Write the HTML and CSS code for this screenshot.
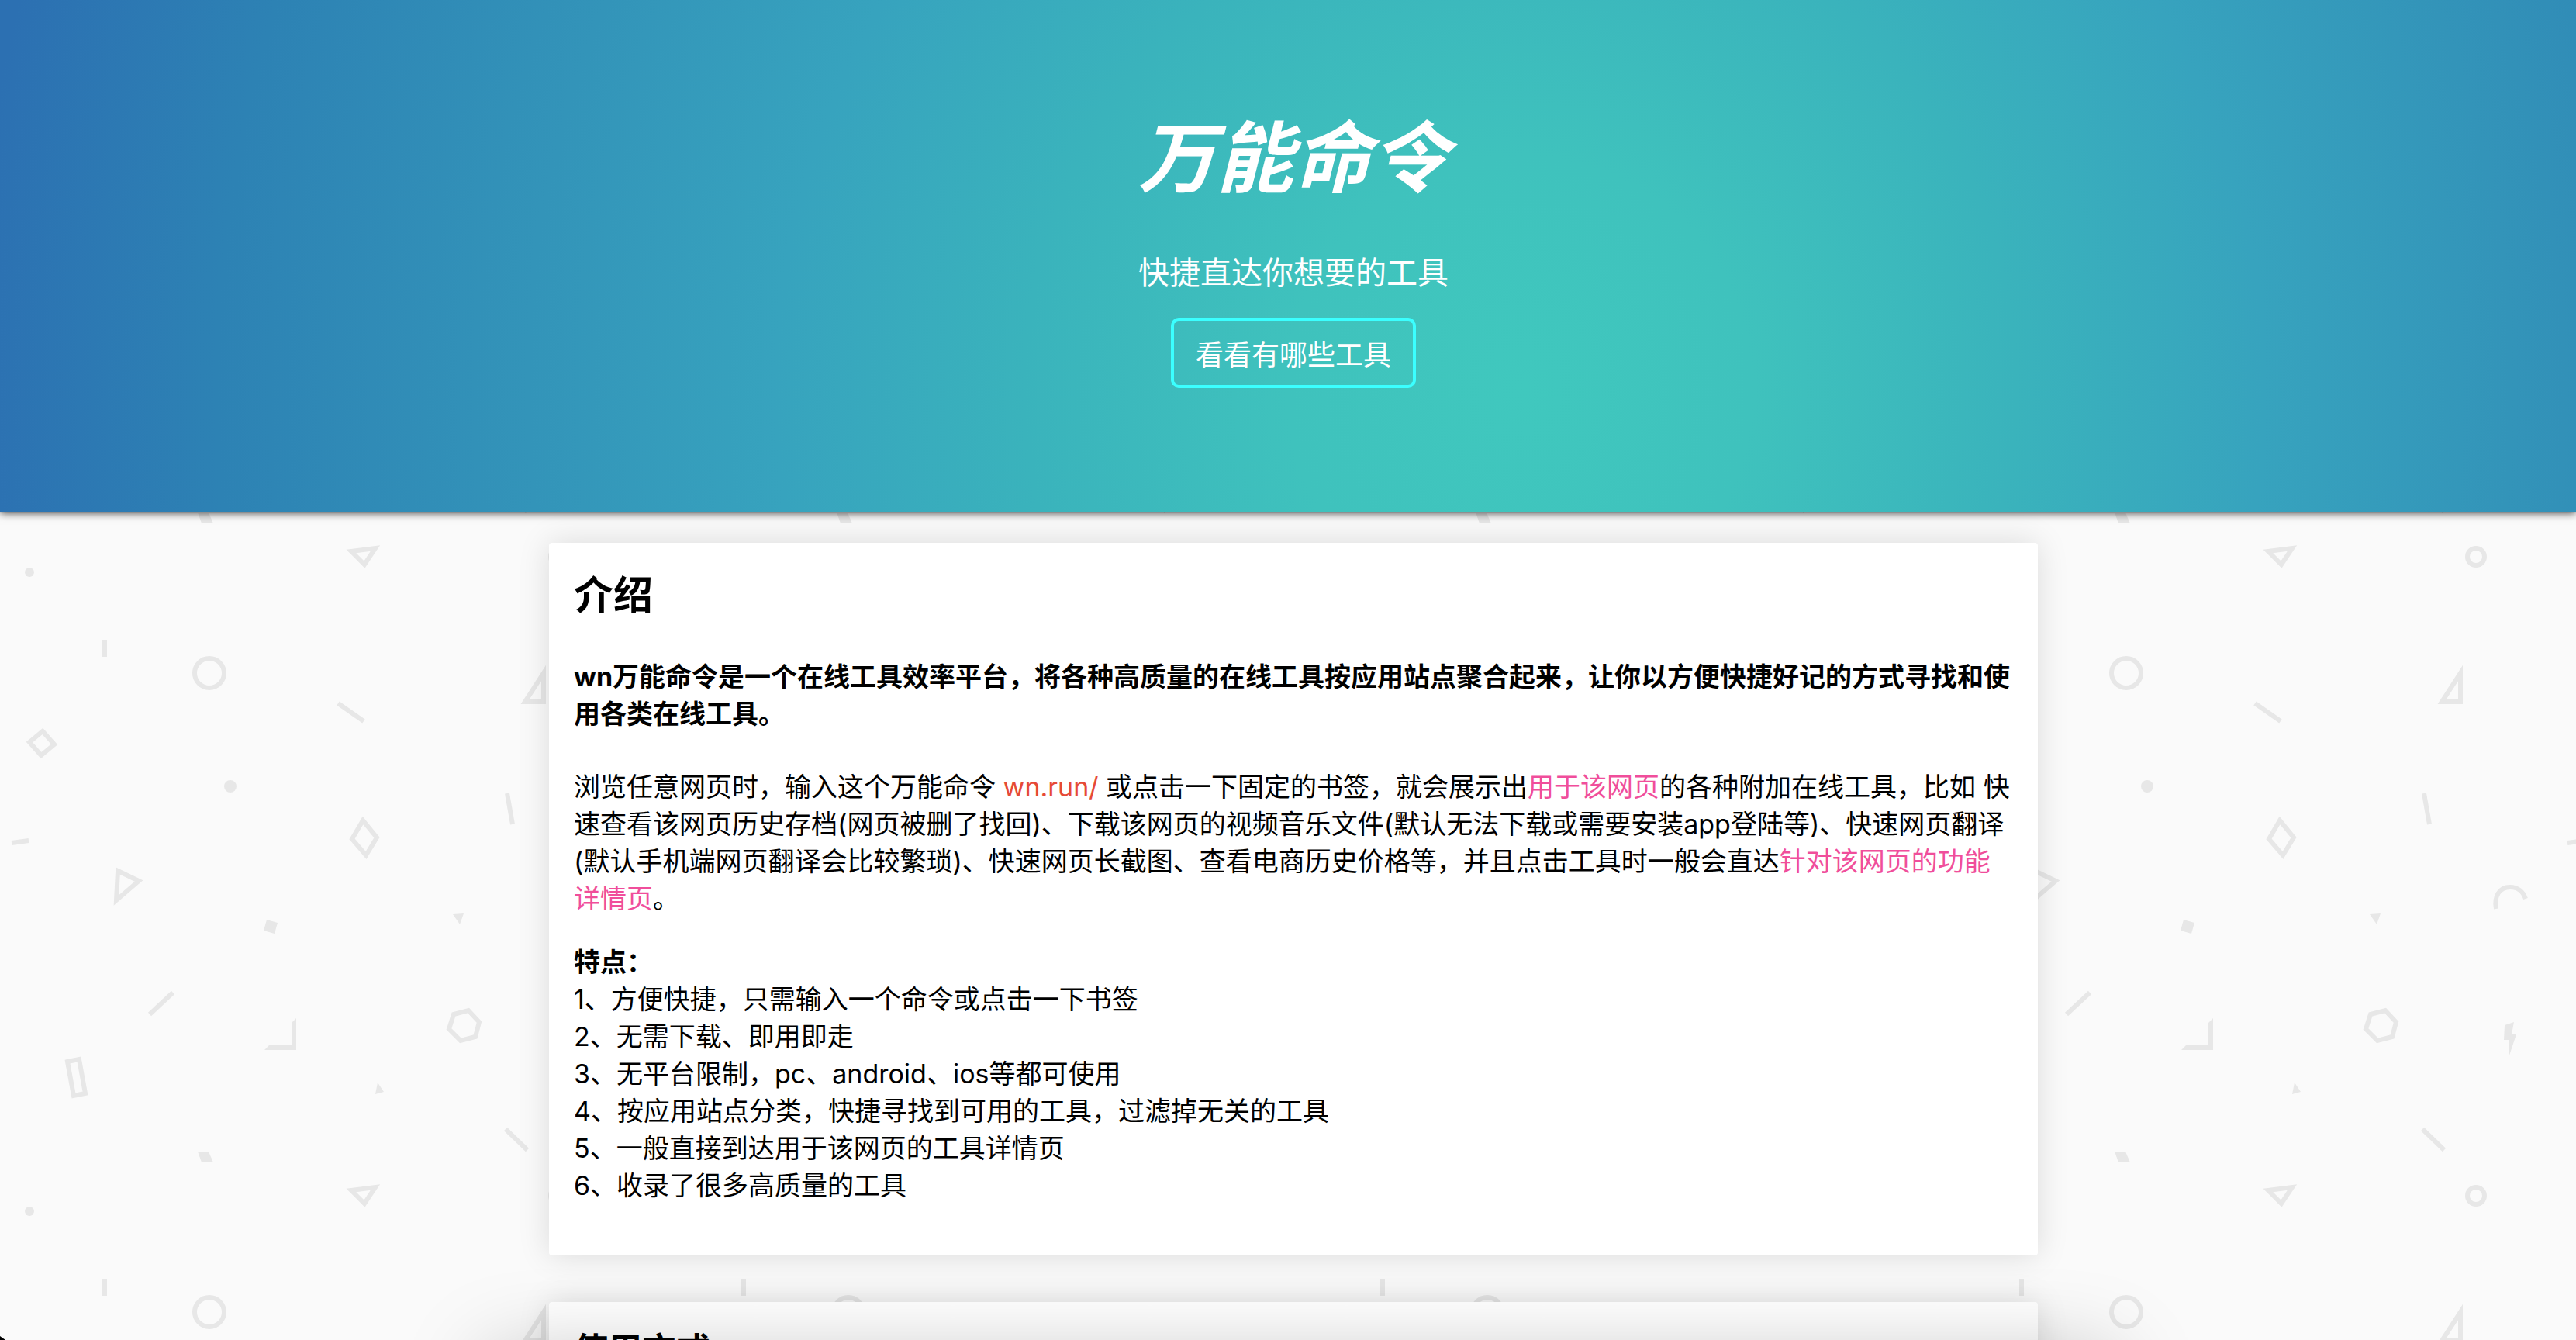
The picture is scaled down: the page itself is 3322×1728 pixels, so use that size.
FILE: index.html
```html
<!DOCTYPE html>
<html lang="zh-CN">
<head>
  <meta charset="UTF-8" />
  <meta name="viewport" content="width=device-width, initial-scale=1.0"/>
  <title>万能命令</title>
  <link rel="stylesheet" href="styles.css">
</head>
<body>
  <svg class="bg" width="100%" height="100%" aria-hidden="true">
    <defs>
      <pattern id="shapes" patternUnits="userSpaceOnUse" x="0" y="676" width="824" height="824" viewBox="0 676 824 824">
        <g class="filled">
          <circle cx="38" cy="738" r="6"/>
          <circle cx="297" cy="1014" r="8"/>
          <path d="M344 1186L358 1190L354 1204L340 1200Z"/>
          <path d="M584 1179L598 1178L593 1192Z"/>
          <path d="M487 1396L495 1408L484 1411Z"/>
          <path d="M255 1485H269L275 1499H260Z"/>
          <path d="M382 1313V1354H341L347 1348H376V1319Z"/>
          <path d="M758 1322L770 1318L767 1334H773L763 1364V1341H757Z"/>
        </g>
        <g class="lines">
          <path d="M453 711L484 707L470 728Z"/>
          <circle cx="721" cy="718" r="11"/>
          <path d="M135 825V847"/>
          <circle cx="270" cy="868" r="19"/>
          <path d="M436 907L469 930"/>
          <path d="M701 868V905H677Z"/>
          <path d="M55 943L70 960L53 974L38 957Z"/>
          <path d="M468 1058L486 1080L472 1103L454 1082Z"/>
          <path d="M654 1023L661 1063"/>
          <path d="M15 1087L37 1084"/>
          <path d="M152 1123L179 1136L150 1161Z"/>
          <path d="M747 1172C744 1156 751 1144 765 1144C775 1144 782 1150 785 1159"/>
          <path d="M193 1308L223 1280"/>
          <path d="M604 1303L618 1318L613 1337L594 1342L579 1327L585 1308Z"/>
          <path d="M87 1369L102 1366L110 1410L95 1413Z"/>
          <path d="M652 1456L680 1483"/>
        </g>
      </pattern>
    </defs>
    <rect width="100%" height="100%" fill="url(#shapes)"/>
  </svg>

  <header class="hero">
    <h1>万能命令</h1>
    <p>快捷直达你想要的工具</p>
    <button class="more" type="button">看看有哪些工具</button>
  </header>

  <main class="content">
    <section class="card">
      <h2>介绍</h2>
      <h4>wn万能命令是一个在线工具效率平台，将各种高质量的在线工具按应用站点聚合起来，让你以方便快捷好记的方式寻找和使用各类在线工具。</h4>
      <p class="desc">浏览任意网页时，输入这个万能命令 <span class="cmd">wn.run/</span> 或点击一下固定的书签，就会展示出<span class="hl">用于该网页</span>的各种附加在线工具，比如 快速查看该网页历史存档(网页被删了找回)、下载该网页的视频音乐文件(默认无法下载或需要安装app登陆等)、快速网页翻译(默认手机端网页翻译会比较繁琐)、快速网页长截图、查看电商历史价格等，并且点击工具时一般会直达<span class="hl">针对该网页的功能详情页</span>。</p>
      <p class="features">
        <b>特点：</b><br>
        1、方便快捷，只需输入一个命令或点击一下书签<br>
        2、无需下载、即用即走<br>
        3、无平台限制，pc、android、ios等都可使用<br>
        4、按应用站点分类，快捷寻找到可用的工具，过滤掉无关的工具<br>
        5、一般直接到达用于该网页的工具详情页<br>
        6、收录了很多高质量的工具
      </p>
    </section>

    <section class="card">
      <h3>使用方式</h3>
    </section>
  </main>

  <div class="dock-shadow"></div>
  <div class="corner"></div>
</body>
</html>
```

FILE: styles.css
```css
* { box-sizing: border-box; }

html, body { height: 100%; }

body {
  margin: 0;
  overflow: hidden;
  background: #fafafa;
  color: #000;
  font-family: Inter, 'Noto Sans CJK SC', sans-serif;
  font-size: 34px;
  line-height: 48px;
}

.bg {
  position: absolute;
  inset: 0;
  z-index: -1;
}

.bg .filled { fill: #e7e7e7; }

.bg .lines {
  fill: none;
  stroke: #e7e7e7;
  stroke-width: 6;
  stroke-miterlimit: 10;
}

.hero {
  display: flex;
  flex-direction: column;
  align-items: center;
  padding: 136px 0 160px 14px;
  color: #fff;
  background: radial-gradient(circle 2000px at 59% 76%, #40c8be 0%, #3fc2bd 15%, #3ab3bc 32%, #37a3be 48%, #3394b9 64%, #2d82b4 84%, #2c70b2 100%);
  box-shadow: 0 2px 10px rgba(0,0,0,0.7);
}

.hero h1 {
  margin: 0;
  font-size: 100px;
  line-height: 136px;
  font-style: italic;
}

.hero p {
  margin: 50px 0 28px;
  font-size: 40px;
  line-height: 60px;
}

.more {
  height: 90px;
  padding: 0 28px;
  border: 4px solid #3bffff;
  border-radius: 10px;
  background: transparent;
  color: #fff;
  font-family: inherit;
  font-size: 36px;
  cursor: pointer;
}

.content {
  display: flex;
  flex-direction: column;
  align-items: center;
  gap: 60px;
  padding: 40px 0 40px 14px;
}

.card {
  width: 100%;
  max-width: 1920px;
  padding: 32px;
  background: #fff;
  border-radius: 4px;
  box-shadow: 0 0 40px rgba(0,0,0,0.13);
}

.card h2 {
  margin: 0 0 45px;
  font-size: 51px;
  line-height: 72px;
}

.card h3 {
  margin: 0 0 45px;
  font-size: 44px;
  line-height: 60px;
}

.card h4 {
  margin: 0 0 46px;
  font-size: 34px;
}

.desc { margin: 0 0 34px; }
.features { margin: 0 0 34px; }

.cmd { color: #e64a36; }
.hl { color: #f04e9b; }

/* soft shade coming up from the bottom of the window */
.dock-shadow {
  position: fixed;
  left: 19%;
  right: 18%;
  top: calc(100% + 22px);
  height: 100px;
  box-shadow: 0 0 110px rgba(0,0,0,0.25);
}

.corner {
  position: fixed;
  left: 0;
  bottom: 0;
  width: 7px;
  height: 5px;
  background: #000;
  clip-path: polygon(0 0, 100% 100%, 0 100%);
}
```
